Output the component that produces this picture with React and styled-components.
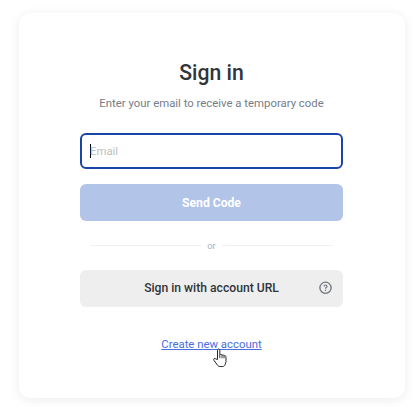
import React from 'react';
import styled, {createGlobalStyle} from 'styled-components';

const COLORS = {
    TITLE: '#30353a',
    SUBTITLE: '#757e87',
    PRIMARY: '#1a45a8',
    PRIMARY_DISABLED: '#b3c4e9',
    LINK: '#4a6de0',
    SECONDARY: '#eeeeee',
    LINE: '#f1f1f1',
    PLACEHOLDER: '#bebebe',
};

const GlobalStyle = createGlobalStyle`
  * {
    box-sizing: border-box;
  }

  body {
    margin: 0;
    background: #fff;
    font-family: Roboto, 'Liberation Sans', sans-serif;
  }
`;

const Page = styled.div`
  height: 407px;
  padding: 13px 12px 0 19px;
  overflow: hidden;
`;

const Card = styled.form`
  display: flex;
  flex-direction: column;
  align-items: center;
  width: 386px;
  height: 385px;
  padding: 46px 62px 0 61px;
  border-radius: 12px;
  background: #fff;
  box-shadow: 0 2px 12px rgba(0, 0, 0, 0.08);
`;

const Title = styled.h1`
  margin: 0;
  color: ${COLORS.TITLE};
  font-size: 21.2px;
  font-weight: 500;
  line-height: 28px;
  white-space: nowrap;
`;

const SubTitle = styled.p`
  margin: 8px 0 0;
  color: ${COLORS.SUBTITLE};
  font-size: 11.37px;
  line-height: 16px;
  white-space: nowrap;
`;

const Field = styled.div`
  display: flex;
  flex: none;
  align-items: center;
  width: 100%;
  height: 36px;
  margin-top: 22px;
  padding: 0 8px;
  border: 2px solid ${COLORS.PRIMARY};
  border-radius: 6px;
  color: ${COLORS.PLACEHOLDER};
  font-size: 11.37px;
`;

const Caret = styled.span`
  width: 1px;
  height: 14px;
  margin-right: -1px;
  background: #000;
`;

const Button = styled.button`
  position: relative;
  flex: none;
  width: 100%;
  height: 37px;
  margin-top: ${({$gap}) => $gap}px;
  padding: 0 0 ${({$primary}) => ($primary ? 0 : 2)}px;
  border: 0;
  border-radius: 6px;
  background: ${({$primary}) => ($primary ? COLORS.PRIMARY_DISABLED : COLORS.SECONDARY)};
  color: ${({$primary}) => ($primary ? '#fff' : COLORS.TITLE)};
  font-family: inherit;
  font-size: 12.15px;
  font-weight: ${({$primary}) => ($primary ? 700 : 500)};
`;

const HelpIcon = styled.svg`
  position: absolute;
  top: 11px;
  right: 10px;
`;

const Divider = styled.div`
  display: flex;
  align-items: center;
  gap: 6px;
  width: 243px;
  height: 12px;
  margin-top: 18px;
  color: #aeb1b5;
  font-size: 9.5px;

  &::before,
  &::after {
    content: '';
    flex: 1;
    height: 1px;
    background: ${COLORS.LINE};
  }
`;

const LinkWrapper = styled.div`
  position: relative;
  margin-top: 29px;
  font-size: 11.37px;
  line-height: 16px;
`;

const Link = styled.a`
  color: ${COLORS.LINK};
  text-decoration: underline;
  white-space: nowrap;
`;

const Pointer = styled.svg`
  position: absolute;
  top: 12px;
  left: 50.5px;
`;

const App = () => (
    <Page>
        <GlobalStyle/>
        <Card>
            <Title>Sign in</Title>
            <SubTitle>Enter your email to receive a temporary code</SubTitle>
            <Field>
                <Caret/>
                Email
            </Field>
            <Button type="button" $primary $gap={15}>Send Code</Button>
            <Divider>or</Divider>
            <Button type="button" $gap={19}>
                Sign in with account URL
                <HelpIcon width="14" height="14" viewBox="0 0 14 14" fill="none" stroke="#6f767d">
                    <circle cx="6.5" cy="6.8" r="5.6" strokeWidth="1.3"/>
                    <path d="M5 5.5c0-.9.6-1.5 1.5-1.5s1.5.6 1.5 1.400c0 1.100-1.500 1.200-1.500 2.300M6.500 8.700v1.200" strokeWidth="1.2"/>
                </HelpIcon>
            </Button>
            <LinkWrapper>
                <Link>Create new account</Link>
                <Pointer width="16" height="20" viewBox="0 0 16 20">
                    <path
                        d="M5.5 11.5V2.2c0-1.7 2.3-1.7 2.3 0v4.6c.6-.8 2-.6 2.200.5.7-.7 1.900-.4 2 .6.8-.5 2-.1 2 1.200v4.400c0 1.300-.8 2-1 3.300-.4 1.200-1.200 1.700-2.400 1.700H8c-1.200 0-1.900-.4-2.500-1.400L1.900 12.300c-.9-1.500.8-2.500 1.900-1.400z"
                        fill="#fff"
                        stroke="#25252d"
                        strokeLinejoin="round"
                    />
                    <path d="M7.8 6.8v3.4M10 7.3v2.9M12 8v2.4" stroke="#25252d" strokeWidth=".9"/>
                </Pointer>
            </LinkWrapper>
        </Card>
    </Page>
);

export default App;
